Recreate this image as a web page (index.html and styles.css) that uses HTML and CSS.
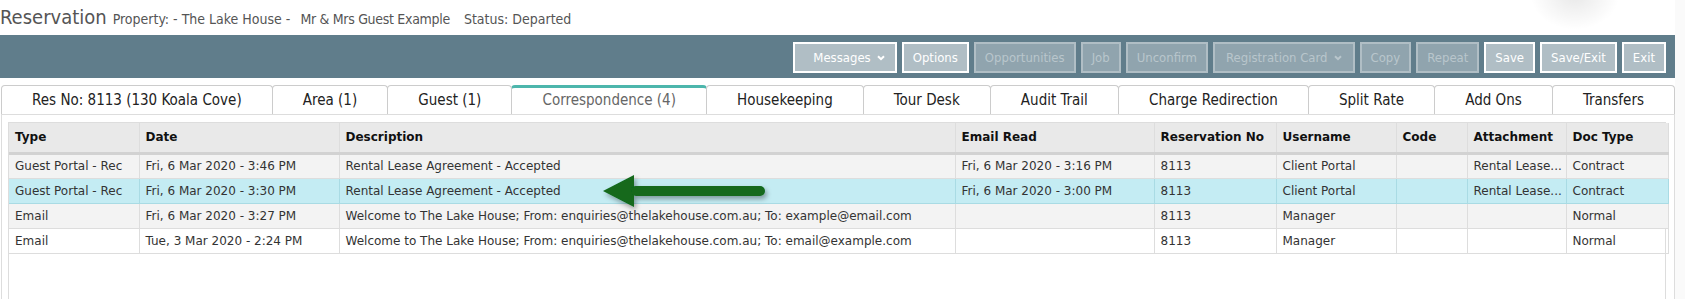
FILE: index.html
```html
<!DOCTYPE html>
<html lang="en">
<head>
  <meta charset="UTF-8">
  <meta name="viewport" content="width=device-width, initial-scale=1.0">
  <title>Reservation - Correspondence</title>
  <link rel="stylesheet" href="styles.css">
</head>
<body>
  <div class="page">
    <div class="page-title">
      <h1>Reservation</h1>
      <span class="meta">Property: - The Lake House - </span>
      <span class="meta guest">Mr &amp; Mrs Guest Example</span>
      <span class="meta status">Status: Departed</span>
    </div>

    <div class="toolbar">
      <button class="btn btn-menu">Messages
        <svg class="caret" width="8" height="6" viewBox="0 0 8 6"><path d="M1 1.2 L4 4.2 L7 1.2" fill="none" stroke="currentColor" stroke-width="2"/></svg>
      </button>
      <button class="btn">Options</button>
      <button class="btn" disabled>Opportunities</button>
      <button class="btn" disabled>Job</button>
      <button class="btn" disabled>Unconfirm</button>
      <button class="btn btn-wide" disabled>Registration Card
        <svg class="caret" width="8" height="6" viewBox="0 0 8 6"><path d="M1 1.2 L4 4.2 L7 1.2" fill="none" stroke="currentColor" stroke-width="2"/></svg>
      </button>
      <button class="btn" disabled>Copy</button>
      <button class="btn" disabled>Repeat</button>
      <button class="btn">Save</button>
      <button class="btn">Save/Exit</button>
      <button class="btn">Exit</button>
    </div>

    <ul class="tabs">
      <li>Res No: 8113 (130 Koala Cove)</li>
      <li>Area (1)</li>
      <li>Guest (1)</li>
      <li class="active">Correspondence (4)</li>
      <li>Housekeeping</li>
      <li>Tour Desk</li>
      <li>Audit Trail</li>
      <li>Charge Redirection</li>
      <li>Split Rate</li>
      <li>Add Ons</li>
      <li>Transfers</li>
    </ul>

    <div class="tab-panel">
      <div class="grid">
        <table>
          <colgroup>
            <col style="width:130px">
            <col style="width:200px">
            <col style="width:616px">
            <col style="width:199px">
            <col style="width:122px">
            <col style="width:120px">
            <col style="width:71px">
            <col style="width:99px">
            <col style="width:102px">
          </colgroup>
          <thead>
            <tr>
              <th>Type</th>
              <th>Date</th>
              <th>Description</th>
              <th>Email Read</th>
              <th>Reservation No</th>
              <th>Username</th>
              <th>Code</th>
              <th>Attachment</th>
              <th>Doc Type</th>
            </tr>
          </thead>
          <tbody>
            <tr>
              <td>Guest Portal - Rec</td>
              <td>Fri, 6 Mar 2020 - 3:46 PM</td>
              <td>Rental Lease Agreement - Accepted</td>
              <td>Fri, 6 Mar 2020 - 3:16 PM</td>
              <td>8113</td>
              <td>Client Portal</td>
              <td></td>
              <td>Rental Lease...</td>
              <td>Contract</td>
            </tr>
            <tr class="selected">
              <td>Guest Portal - Rec</td>
              <td>Fri, 6 Mar 2020 - 3:30 PM</td>
              <td>Rental Lease Agreement - Accepted</td>
              <td>Fri, 6 Mar 2020 - 3:00 PM</td>
              <td>8113</td>
              <td>Client Portal</td>
              <td></td>
              <td>Rental Lease...</td>
              <td>Contract</td>
            </tr>
            <tr>
              <td>Email</td>
              <td>Fri, 6 Mar 2020 - 3:27 PM</td>
              <td>Welcome to The Lake House; From: enquiries@thelakehouse.com.au; To: example@email.com</td>
              <td></td>
              <td>8113</td>
              <td>Manager</td>
              <td></td>
              <td></td>
              <td>Normal</td>
            </tr>
            <tr>
              <td>Email</td>
              <td>Tue, 3 Mar 2020 - 2:24 PM</td>
              <td>Welcome to The Lake House; From: enquiries@thelakehouse.com.au; To: email@example.com</td>
              <td></td>
              <td>8113</td>
              <td>Manager</td>
              <td></td>
              <td></td>
              <td>Normal</td>
            </tr>
          </tbody>
        </table>

        <!-- callout pointing at the selected row -->
        <svg class="callout" width="190" height="50" viewBox="0 0 190 50">
          <defs>
            <filter id="arrow-shadow" x="-20%" y="-40%" width="140%" height="180%">
              <feDropShadow dx="2" dy="3" stdDeviation="2.5" flood-color="#000" flood-opacity="0.35"/>
            </filter>
          </defs>
          <g filter="url(#arrow-shadow)" fill="#12691d">
            <polygon points="6,20 37,4 37,36"/>
            <rect x="34" y="15" width="134" height="10" rx="5"/>
          </g>
        </svg>
      </div>
    </div>
  </div>
</body>
</html>
```

FILE: styles.css
```css
/* Base */
* {
  margin: 0;
  padding: 0;
  box-sizing: border-box;
}

html {
  background-color: #fafafa;
}

body {
  margin: 0;
  overflow: hidden;
  font-family: 'DejaVu Sans Condensed', 'DejaVu Sans', sans-serif;
  color: #333;
}

.page {
  position: relative;
  width: 1675px;
  height: 299px;
  background-color: #fff;
}

/* soft blur in the top right corner */
.page::before {
  content: '';
  position: absolute;
  top: -40px;
  left: 1530px;
  width: 90px;
  height: 70px;
  background: radial-gradient(ellipse at center, rgba(0, 0, 0, 0.09) 0%, rgba(0, 0, 0, 0) 70%);
}

/* Title */
.page-title {
  display: flex;
  align-items: baseline;
  height: 35px;
  padding-top: 5px;
  color: #555;
}

.page-title h1 {
  font-size: 20px;
  font-weight: normal;
  margin-right: 6px;
}

.page-title .meta {
  font-size: 14px;
}

.page-title .guest {
  margin-left: 10px;
  letter-spacing: -0.3px;
}

.page-title .status {
  margin-left: 14px;
}

/* Toolbar */
.toolbar {
  display: flex;
  justify-content: flex-end;
  gap: 5px;
  height: 43px;
  padding: 7px 9px 0;
  background-color: #607d8b;
}

.btn {
  display: flex;
  align-items: center;
  justify-content: center;
  min-width: 36px;
  height: 31px;
  padding: 0 9px;
  border: 2px solid #fff;
  background-color: #b0bec5;
  color: #fff;
  font-family: 'DejaVu Sans Condensed', 'DejaVu Sans', sans-serif;
  font-size: 13px;
  cursor: pointer;
}

.btn:disabled {
  border-color: #b0bec5;
  background-color: #90a4ae;
  color: #b9c6cc;
  cursor: default;
}

.btn-menu {
  padding: 0 10px 0 18px;
}

.btn-wide {
  padding: 0 11px;
}

.btn .caret {
  margin-left: 6px;
}

/* Tabs */
.tabs {
  display: flex;
  list-style: none;
  margin-top: 7px;
  padding-left: 1px;
}

.tabs li {
  flex: 1 1 auto;
  height: 29px;
  padding: 5px 8px 0;
  border: 1px solid #ccc;
  border-bottom: none;
  border-radius: 4px 4px 0 0;
  text-align: center;
  font-size: 15px;
  color: #222;
  white-space: nowrap;
}

.tabs li + li {
  margin-left: -1px;
}

.tabs li.active {
  border-top: 3px solid #4db6ac;
  padding-top: 3px;
  color: #666;
}

.tab-panel {
  margin-left: 1px;
  height: 200px;
  padding: 7px 8px 0 6px;
  border: 1px solid #ddd;
  border-bottom: none;
}

/* Grid */
.grid {
  position: relative;
  height: 200px;
  border: 1px solid #ddd;
  border-bottom: none;
  font-family: 'DejaVu Sans', Verdana, sans-serif;
  font-size: 12px;
}

.grid table {
  width: 1657px;
  table-layout: fixed;
  border-collapse: collapse;
}

.grid th,
.grid td {
  padding: 0 6px;
  border: 1px solid #ddd;
  text-align: left;
  white-space: nowrap;
  overflow: hidden;
}

.grid th {
  height: 30px;
  background-color: #e9e9e9;
  border-top: none;
  border-bottom: 3px solid #d2d2d2;
  color: #111;
  font-size: 12px;
}

.grid th:first-child,
.grid td:first-child {
  border-left: none;
}

.grid td {
  height: 25px;
  color: #333;
}

.grid tbody tr:nth-child(odd) {
  background-color: #f3f3f3;
}

.grid tbody tr.selected {
  background-color: #c4ecf3;
}

.grid tbody tr.selected td {
  border-color: #a9dbe4;
}

.callout {
  position: absolute;
  left: 588px;
  top: 48px;
}
```
